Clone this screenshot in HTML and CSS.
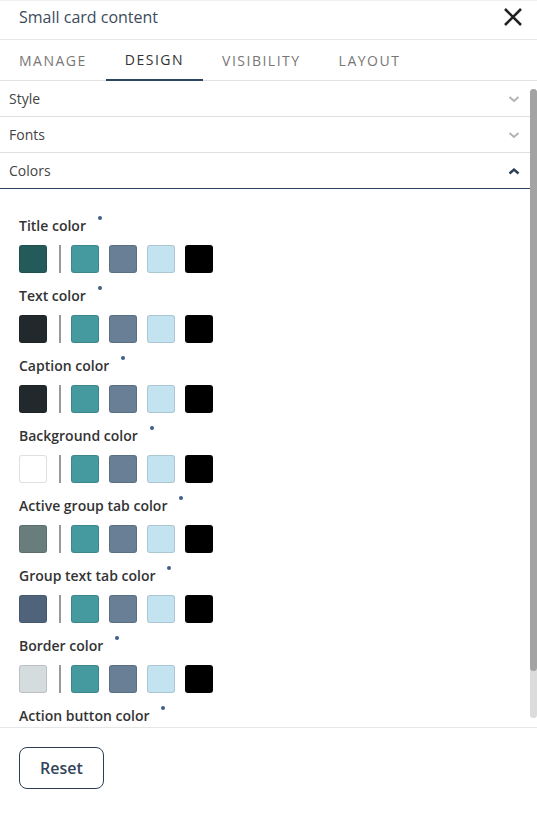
FILE: index.html
```html
<!DOCTYPE html>
<html lang="en">
<head>
  <meta charset="UTF-8">
  <title>Small card content</title>
  <link rel="stylesheet" href="styles.css">
</head>
<body>
  <div class="panel">
    <div class="panel-header">
      <span class="panel-title">Small card content</span>
      <button class="close-btn" aria-label="Close">
        <svg width="20" height="20" viewBox="0 0 20 20"><path d="M2 2 L18 18 M18 2 L2 18" stroke="#222" stroke-width="2.6" fill="none"/></svg>
      </button>
    </div>

    <div class="tabs">
      <div class="tab">Manage</div>
      <div class="tab active">Design</div>
      <div class="tab">Visibility</div>
      <div class="tab">Layout</div>
    </div>

    <div class="body-wrap">
      <div class="scroll-area">
        <div class="section">
          <span>Style</span>
          <svg class="chev" width="12" height="8" viewBox="0 0 12 8"><path d="M1.5 2 L6 6 L10.5 2" stroke="#b3b3b3" stroke-width="2" fill="none"/></svg>
        </div>
        <div class="section">
          <span>Fonts</span>
          <svg class="chev" width="12" height="8" viewBox="0 0 12 8"><path d="M1.5 2 L6 6 L10.5 2" stroke="#b3b3b3" stroke-width="2" fill="none"/></svg>
        </div>
        <div class="section open">
          <span>Colors</span>
          <svg class="chev" width="12" height="8" viewBox="0 0 12 8"><path d="M1.5 6.5 L6 2.5 L10.5 6.5" stroke="#2c3e55" stroke-width="2.4" fill="none"/></svg>
        </div>

        <div class="colors" id="colors"></div>
      </div>
      <!-- always-visible scrollbar -->
      <div class="scrollbar"><div class="thumb"></div></div>
    </div>

    <div class="panel-footer">
      <button class="reset-btn">Reset</button>
    </div>
  </div>

  <script>
    const palette = ['#459a9f', '#687f96', '#c2e3ef', '#000000'];
    const fields = [
      ['Title color', '#245a5a'],
      ['Text color', '#22292c'],
      ['Caption color', '#22292c'],
      ['Background color', '#ffffff'],
      ['Active group tab color', '#687d7c'],
      ['Group text tab color', '#4f637a'],
      ['Border color', '#d5dcde'],
      ['Action button color', '#3a6f8f']
    ];

    const box = document.getElementById('colors');
    fields.forEach(([label, current]) => {
      const row = document.createElement('div');
      row.className = 'color-field';

      let html = '<div class="color-label">' + label + '<span class="dot"></span></div>';
      html += '<div class="swatches">';
      html += '<span class="swatch current" style="background:' + current + '"></span>';
      html += '<span class="divider"></span>';
      palette.forEach(c => {
        html += '<span class="swatch" style="background:' + c + '"></span>';
      });
      html += '</div>';

      row.innerHTML = html;
      box.appendChild(row);
    });
  </script>
</body>
</html>
```

FILE: styles.css
```css
* {
  box-sizing: border-box;
}
html, body {
  margin: 0;
  height: 100%;
}
body {
  font-family: "Open Sans", Arial, sans-serif;
  background: #fff;
  color: #333;
}
.panel {
  display: flex;
  flex-direction: column;
  height: 100vh;
  border-top: 1px solid #f2f2f2;
}
.panel-header {
  display: flex;
  align-items: center;
  justify-content: space-between;
  height: 39px;
  padding: 0 14px 0 19px;
  border-bottom: 1px solid #e6e6e6;
  flex-shrink: 0;
}
.panel-title {
  font-size: 16px;
  color: #3d4b5d;
  margin-top: -6px;
}
.close-btn {
  background: none;
  border: none;
  padding: 0;
  cursor: pointer;
  display: flex;
  margin-top: -6px;
}
.tabs {
  display: flex;
  height: 41px;
  border-bottom: 1px solid #e2e2e2;
  flex-shrink: 0;
}
.tab {
  padding: 2px 19px 0;
  font-size: 14px;
  letter-spacing: 1.5px;
  text-transform: uppercase;
  color: #777;
  display: flex;
  align-items: center;
  border-bottom: 2px solid transparent;
  margin-bottom: -1px;
  cursor: pointer;
}
.tab.active {
  color: #333;
  padding-top: 0;
  border-bottom-color: #2c4560;
}
.body-wrap {
  flex: 1;
  display: flex;
  min-height: 0;
}
.scroll-area {
  flex: 1;
  overflow-y: auto;
  scrollbar-width: none;
}
.scroll-area::-webkit-scrollbar {
  display: none;
}
.scrollbar {
  width: 7px;
  margin: 8px 0 9px;
  background: #dcdcdc;
  border-radius: 4px;
  display: flex;
  flex-direction: column;
}
.scrollbar .thumb {
  height: 582px;
  background: #a3a3a3;
  border-radius: 4px;
}
.section {
  display: flex;
  align-items: center;
  justify-content: space-between;
  height: 36px;
  padding: 0 10px 0 9px;
  font-size: 14px;
  color: #444;
  border-bottom: 1px solid #e0e0e0;
}
.section.open {
  border-bottom-color: #2c4560;
}
.colors {
  padding: 27px 19px 16px;
}
.color-field {
  margin-bottom: 13px;
}
.color-label {
  font-size: 14px;
  font-weight: 600;
  line-height: 20px;
  color: #333;
}
.dot {
  display: inline-block;
  width: 4px;
  height: 4px;
  border-radius: 50%;
  background: #3f5f8a;
  margin-left: 12px;
  vertical-align: top;
}
.swatches {
  display: flex;
  align-items: center;
  gap: 10px;
  margin-top: 9px;
}
.swatch {
  width: 28px;
  height: 28px;
  border-radius: 3px;
  border: 1px solid rgba(0, 0, 0, 0.12);
}
.swatch.current {
  margin-right: 2px;
}
.divider {
  width: 2px;
  height: 28px;
  background: #999;
}
.panel-footer {
  height: 86px;
  flex-shrink: 0;
  border-top: 1px solid #e6e6e6;
  padding: 19px 19px;
}
.reset-btn {
  width: 85px;
  height: 42px;
  background: #fff;
  border: 1px solid #2c3e55;
  border-radius: 8px;
  font-family: "Open Sans", Arial, sans-serif;
  font-size: 16px;
  font-weight: 600;
  color: #33445a;
  cursor: pointer;
}
```
